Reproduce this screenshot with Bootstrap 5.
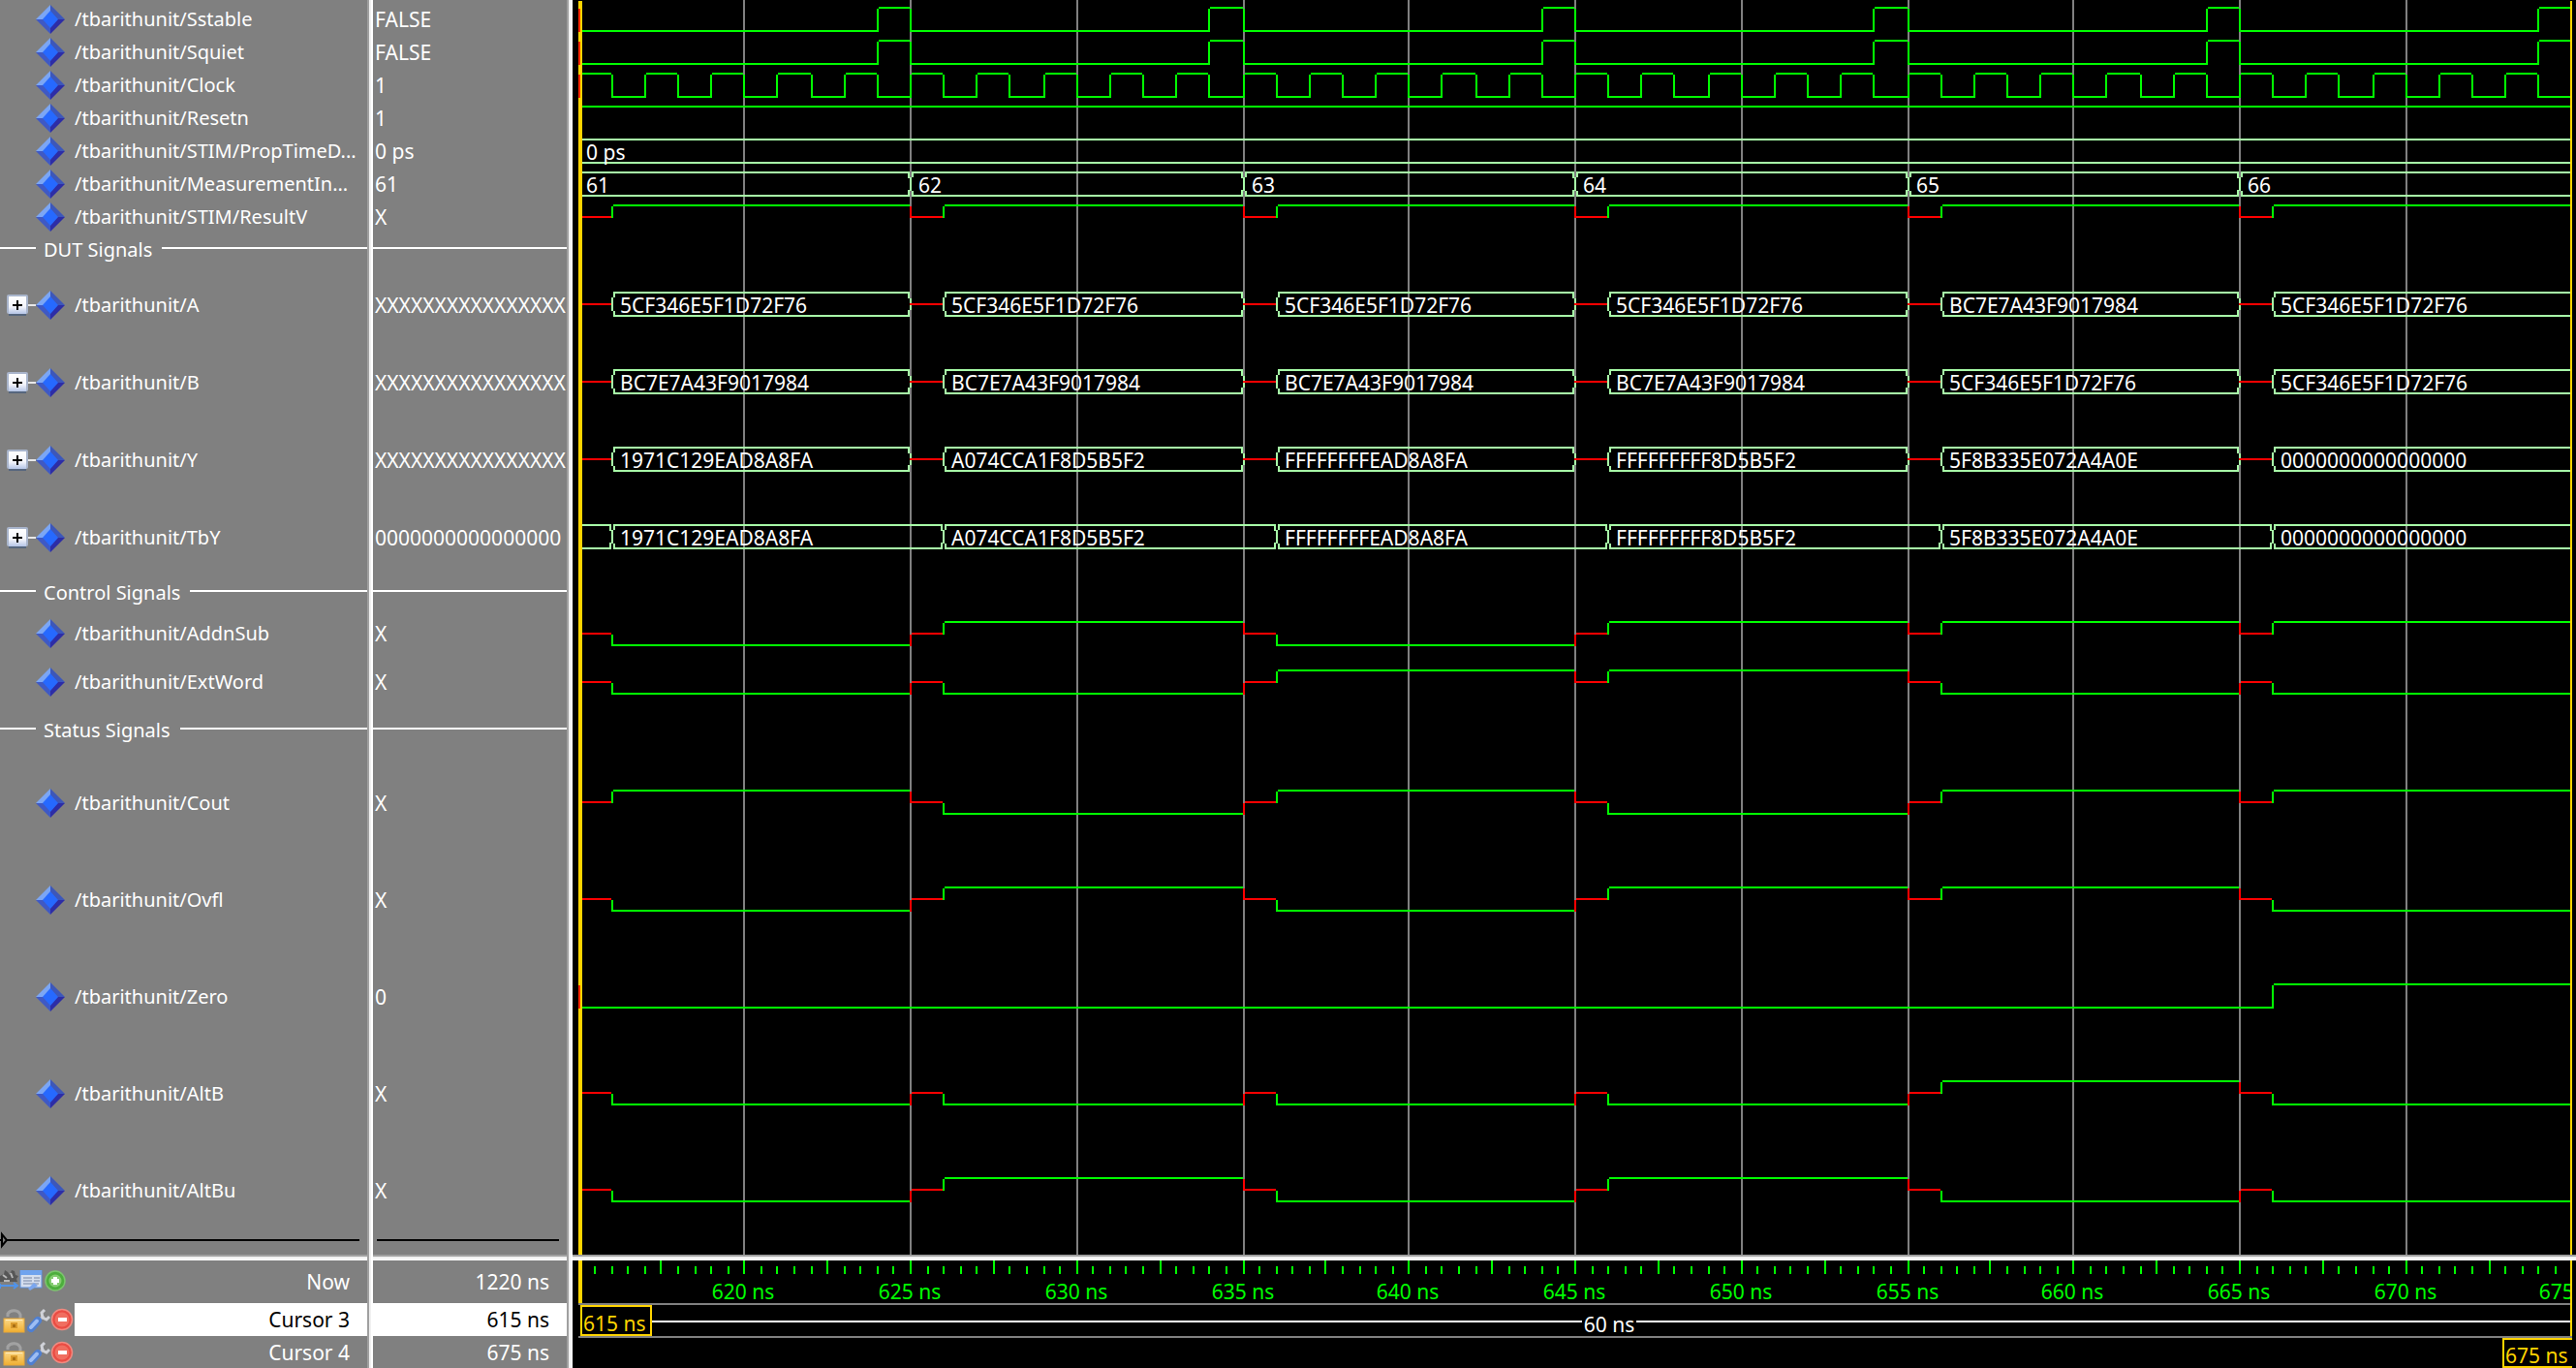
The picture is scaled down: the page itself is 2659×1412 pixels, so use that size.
<!DOCTYPE html>
<html lang="en">
<head>
<meta charset="utf-8">
<meta name="viewport" content="width=device-width, initial-scale=1">
<title>Wave - tbarithunit</title>
<link href="https://cdn.jsdelivr.net/npm/bootstrap@5.3.0/dist/css/bootstrap.min.css" rel="stylesheet">
<style>
body{background:#000;color:#fff;font-family:"Noto Sans","Open Sans",sans-serif;font-size:21px;line-height:30px}
.pane-grey{background:#808080}
.names-col{width:379px}
.values-col{width:200px}
.split-v{width:6px;background:linear-gradient(to right,#a0a0a0 0 2px,#f0f0f0 2px 4px,#fff 4px)}
.split-h{height:6px;background:linear-gradient(#a0a0a0 0 2px,#f0f0f0 2px 4px,#fff 4px)}
.rows-top{padding-top:3px}
.names-font{font-size:20px}
.h34{height:34px}.h50{height:50px}.h80{height:80px}.h100{height:100px}
.tree-btn{width:37px;height:30px;padding:0 0 0 7px;border:0;background:none;display:flex}
.tree-gap{width:37px}
.sig-name{padding-left:10px}
.sig-value{padding-left:2px}
.rule-line{height:2px;background:#fff;margin-bottom:4px}
.rule-lead{width:37px}
.rule-text{padding:0 10px 0 8px}
.end-row{height:16px}
.end-line{height:2px;background:#000}
.end-mark{left:0;top:-6px}
.now-row{height:44px}
.cur-row{height:34px}
.cur-last{height:33px}
.cur-tools{width:77px;padding-left:3px}
.now-tools{width:77px}
.tool-btn{border:0;background:none;padding:0;width:25px;height:24px;display:flex}
.tool-first{width:20px}
.end-text{padding-right:18px}
.picked{background:#fff;color:#000}
.under{left:0;top:0}
.waves-col{min-width:0}
svg{display:block;overflow:visible;flex-shrink:0}
svg text{font-size:21px;fill:#fff}
.grid-box,.wave-row svg{shape-rendering:crispEdges}
</style>
<script src="https://cdn.jsdelivr.net/npm/bootstrap@5.3.0/dist/js/bootstrap.bundle.min.js"></script>
</head>
<body class="overflow-x-hidden">
<svg width="0" height="0" class="position-absolute" aria-hidden="true">
  <defs>
    <linearGradient id="gBox" x1="0" y1="0" x2="0" y2="1"><stop offset="0" stop-color="#fff"/><stop offset=".6" stop-color="#f2f4fb"/><stop offset="1" stop-color="#b4c4e6"/></linearGradient>
    <linearGradient id="gGold" x1="0" y1="0" x2="0" y2="1"><stop offset="0" stop-color="#fbd98a"/><stop offset="1" stop-color="#f0ae30"/></linearGradient>
    <symbol id="gem" viewBox="0 0 30 30"><path d="M15 0L15 15L0 15z" fill="#7ba6f5"/><path d="M15 0L30 15H15z" fill="#3d57b9"/><path d="M0 15H15V30z" fill="#3f59c4"/><path d="M30 15H15V30z" fill="#2d2da6"/><path d="M15 6L23 15L15 24L7 15z" fill="#2669ff"/></symbol>
    <symbol id="plusbox" viewBox="0 0 30 22"><path d="M20 11h10" stroke="#e8e8e8" stroke-width="2"/><rect x="0" y="0" width="22" height="20" rx="2" fill="#a9b5cc"/><rect x="2" y="2" width="18" height="18" fill="url(#gBox)"/><rect x="2" y="20" width="18" height="2" fill="#56667e"/><path d="M6 11h10M11 6v10" stroke="#000" stroke-width="2"/></symbol>
    <symbol id="lock" viewBox="0 0 24 26"><path d="M5 9V6a7 6 0 0 1 13 1v4" fill="none" stroke="#a2a2a2" stroke-width="3"/><rect x="1" y="11" width="21" height="14" fill="url(#gGold)" stroke="#e8a838"/><path d="M3 12.500h17" stroke="#fdeec4" stroke-width="1"/><rect x="8" y="15" width="7" height="6" fill="#d99a2c"/><rect x="10" y="17" width="3" height="3" fill="#a86f14"/></symbol>
    <symbol id="wrench" viewBox="0 0 24 26"><path d="M10 15L17 8" stroke="#b9bcc2" stroke-width="3"/><path d="M18 2l-3 3 1 5 4 2 3-3" fill="none" stroke="#d0d2d8" stroke-width="3"/><path d="M4 21L11 13" stroke="#4f7fd0" stroke-width="8" stroke-linecap="round"/><path d="M4 20L10 13.500" stroke="#9dbdf3" stroke-width="4" stroke-linecap="round"/></symbol>
    <symbol id="minus" viewBox="0 0 24 24"><circle cx="12" cy="12" r="10.500" fill="#ea4c43" stroke="#f08a80" stroke-width="1.500"/><circle cx="12" cy="12" r="7.500" fill="#f06e60"/><rect x="8" y="10" width="9" height="4" fill="#fff"/></symbol>
    <symbol id="add" viewBox="0 0 24 24"><circle cx="12" cy="11" r="10" fill="#4cae3c" stroke="#7cc46e" stroke-width="1.500"/><circle cx="12" cy="11" r="6.500" fill="#84cc70"/><path d="M12 7v8M8 11h8" stroke="#fff" stroke-width="4"/></symbol>
    <symbol id="find" viewBox="0 0 20 22"><path d="M0 6L4 4 5 0 8 2 10 5 12 0 15 1 16 5 19 6 17 9 18 12H0z" fill="#565656"/><path d="M3 5l4 3M11 3l2 5M4 11h6" stroke="#b8b8b8" stroke-width="2"/><path d="M0 16H17M14 13l4 3-4 3M0 14v5" stroke="#4f93ea" stroke-width="2" fill="none"/></symbol>
    <symbol id="sheet" viewBox="0 0 24 24"><rect x="1" y="0" width="22" height="18" fill="#d5deee" stroke="#5b8fdd"/><rect x="1" y="0" width="22" height="5" fill="#6fa3ee"/><path d="M4 8h9M15 8h6M4 11h9M15 11h6M4 14h16" stroke="#96a4bd" stroke-width="1.500"/><path d="M9 19l6-6 4 3-8 5z" fill="#7ba6ee"/></symbol>
  </defs>
</svg>

<main class="d-flex align-items-stretch">
  <section class="names-col flex-shrink-0 d-flex flex-column pane-grey" aria-label="Signal names">
    <div class="rows-top names-font" id="names"></div>
    <div class="end-row position-relative pe-2">
      <div class="end-line"></div>
      <svg class="end-mark position-absolute" width="8" height="14"><path d="M2 1V13L7 7z" fill="#808080" stroke="#000" stroke-width="2"/></svg>
    </div>
    <div class="split-h"></div>
    <div class="now-row d-flex align-items-center">
      <div class="now-tools d-flex">
        <button class="tool-btn tool-first" aria-label="Find"><svg width="20" height="22"><use href="#find"/></svg></button>
        <button class="tool-btn" aria-label="Properties"><svg width="24" height="24"><use href="#sheet"/></svg></button>
        <button class="tool-btn" aria-label="Insert cursor"><svg width="24" height="24"><use href="#add"/></svg></button>
      </div>
      <div class="flex-grow-1 text-end end-text">Now</div>
    </div>
    <div class="cur-row d-flex align-items-stretch">
      <div class="cur-tools d-flex align-items-center flex-shrink-0">
        <button class="tool-btn" aria-label="Lock Cursor 3"><svg width="24" height="26"><use href="#lock"/></svg></button>
        <button class="tool-btn" aria-label="Edit Cursor 3"><svg width="24" height="26"><use href="#wrench"/></svg></button>
        <button class="tool-btn" aria-label="Remove Cursor 3"><svg width="24" height="24"><use href="#minus"/></svg></button>
      </div>
      <div class="flex-grow-1 picked d-flex align-items-center justify-content-end end-text">Cursor 3</div>
    </div>
    <div class="cur-last d-flex align-items-stretch">
      <div class="cur-tools d-flex align-items-center flex-shrink-0">
        <button class="tool-btn" aria-label="Lock Cursor 4"><svg width="24" height="26"><use href="#lock"/></svg></button>
        <button class="tool-btn" aria-label="Edit Cursor 4"><svg width="24" height="26"><use href="#wrench"/></svg></button>
        <button class="tool-btn" aria-label="Remove Cursor 4"><svg width="24" height="24"><use href="#minus"/></svg></button>
      </div>
      <div class="flex-grow-1 d-flex align-items-center justify-content-end end-text">Cursor 4</div>
    </div>
  </section>
  <div class="split-v flex-shrink-0"></div>
  <section class="values-col flex-shrink-0 d-flex flex-column pane-grey" aria-label="Values">
    <div class="rows-top" id="values"></div>
    <div class="end-row ps-1 pe-2"><div class="end-line"></div></div>
    <div class="split-h"></div>
    <div class="now-row d-flex align-items-center justify-content-end end-text">1220 ns</div>
    <div class="cur-row picked d-flex align-items-center justify-content-end end-text">615 ns</div>
    <div class="cur-last d-flex align-items-center justify-content-end end-text">675 ns</div>
  </section>
  <div class="split-v flex-shrink-0"></div>
  <section class="waves-col flex-grow-1 overflow-hidden d-flex flex-column" aria-label="Waveforms">
    <div class="position-relative">
      <svg class="grid-box under position-absolute" id="grid" width="100%" height="100%"></svg>
      <div class="rows-top position-relative" id="waves"></div>
      <div class="end-row"></div>
      <svg class="grid-box under position-absolute" id="marks" width="100%" height="100%"></svg>
    </div>
    <div class="split-h"></div>
    <svg id="timeline" width="100%" height="111"></svg>
  </section>
</main>

<script>
const T0 = 615, T1 = 675, P = '/tbarithunit/';
const A = '5CF346E5F1D72F76', B = 'BC7E7A43F9017984', Z = '0000000000000000', X16 = 'X'.repeat(16);
const Y = ['1971C129EAD8A8FA', 'A074CCA1F8D5B5F2', 'FFFFFFFFEAD8A8FA', 'FFFFFFFFF8D5B5F2', '5F8B335E072A4A0E', Z];

// one undefined nanosecond at the start of each 10 ns measurement, then the value
const perTest = v => [...v].flatMap((s, i) => [[T0 + 10 * i, 'X'], [T0 + 1 + 10 * i, s]]);
const pulse = [0, 1, 2, 3, 4, 5].flatMap(i => [[T0 + 10 * i, '0'], [T0 + 9 + 10 * i, '1']]);
const clock = Array.from({length: 60}, (_, i) => [T0 + i, i % 2 ? '0' : '1']);

const rows = [
  {n: 'Sstable', v: 'FALSE', h: 34, bit: pulse, edge: 1},
  {n: 'Squiet', v: 'FALSE', h: 34, bit: pulse, edge: 1},
  {n: 'Clock', v: '1', h: 34, bit: clock, edge: 1},
  {n: 'Resetn', v: '1', h: 34, bit: [[T0, '1']]},
  {n: 'STIM/PropTimeD...', v: '0 ps', h: 34, bus: [[T0, '0 ps']]},
  {n: 'MeasurementIn...', v: '61', h: 34, bus: [61, 62, 63, 64, 65, 66].map((m, i) => [T0 + 10 * i, '' + m])},
  {n: 'STIM/ResultV', v: 'X', h: 34, bit: perTest('111111')},
  {div: 'DUT Signals', h: 34},
  {n: 'A', v: X16, h: 80, tree: 1, bus: perTest([A, A, A, A, B, A])},
  {n: 'B', v: X16, h: 80, tree: 1, bus: perTest([B, B, B, B, A, A])},
  {n: 'Y', v: X16, h: 80, tree: 1, bus: perTest(Y)},
  {n: 'TbY', v: Z, h: 80, tree: 1, bus: [[T0, ''], ...Y.map((y, i) => [T0 + 1 + 10 * i, y])]},
  {div: 'Control Signals', h: 34},
  {n: 'AddnSub', v: 'X', h: 50, bit: perTest('010111')},
  {n: 'ExtWord', v: 'X', h: 50, bit: perTest('001100')},
  {div: 'Status Signals', h: 50},
  {n: 'Cout', v: 'X', h: 100, bit: perTest('101011')},
  {n: 'Ovfl', v: 'X', h: 100, bit: perTest('010110')},
  {n: 'Zero', v: '0', h: 100, bit: [[T0, '0'], [666, '1']], edge: 1},
  {n: 'AltB', v: 'X', h: 100, bit: perTest('000010')},
  {n: 'AltBu', v: 'X', h: 100, bit: perTest('010100')}
];

const $ = id => document.getElementById(id);
$('names').innerHTML = rows.map(r => r.div
  ? `<div class="h${r.h} d-flex align-items-center"><div class="rule-line rule-lead"></div><span class="rule-text">${r.div}</span><div class="rule-line flex-grow-1"></div></div>`
  : `<div class="h${r.h} d-flex align-items-center">` +
    (r.tree ? `<button class="tree-btn flex-shrink-0 align-items-center" aria-label="Expand ${r.n}"><svg width="30" height="22"><use href="#plusbox"/></svg></button>` : '<span class="tree-gap flex-shrink-0"></span>') +
    `<svg width="30" height="30"><use href="#gem"/></svg><span class="sig-name text-nowrap">${P}${r.n}</span></div>`).join('');
$('values').innerHTML = rows.map(r => r.div
  ? `<div class="h${r.h} d-flex align-items-center"><div class="rule-line flex-grow-1"></div></div>`
  : `<div class="h${r.h} d-flex align-items-center sig-value">${r.v}</div>`).join('');
$('waves').innerHTML = rows.map(r => `<div class="h${r.h} wave-row">${r.div ? '' : `<svg width="100%" height="${r.h}"></svg>`}</div>`).join('');

const box = (x, y, w, h, c) => w > 0 && h > 0 ? `<rect x="${x}" y="${y}" width="${w}" height="${h}" fill="${c}"/>` : '';
const GREEN = '#0f0', RED = '#f00', PALE = '#a8ffa8', GOLD = '#ffd400', GREY = '#808080';
// vertical centre of the trace inside a row of each height
const MID = {34: 17, 50: 25, 80: 39, 100: 49};

function draw() {
  const W = $('waves').clientWidth, last = W - 6;
  const px = t => Math.min(last, 6 + 2 * Math.floor((t - T0) * (W - 10) / 120 + 1e-6));

  document.querySelectorAll('.wave-row').forEach((el, i) => {
    const r = rows[i], svg = el.firstElementChild;
    if (!svg) return;
    const mid = MID[r.h];
    let s = '';
    if (r.bit) {
      const lvl = {'1': mid - 13, 'X': mid - 1, '0': mid + 11};
      r.bit.forEach(([t, v], k) => {
        const a = px(t), b = k + 1 < r.bit.length ? px(r.bit[k + 1][0]) : last, c = v === 'X' ? RED : GREEN;
        s += box(a + 2, lvl[v], b - a - 2, 2, c);
        if (k) {
          const p = lvl[r.bit[k - 1][1]], q = lvl[v];
          s += box(a, Math.min(p, q) + 2, 2, Math.abs(p - q), c);
        }
      });
    } else {
      r.bus.forEach(([t, v], k) => {
        const a = px(t), more = k + 1 < r.bus.length, b = more ? px(r.bus[k + 1][0]) : last;
        if (v === 'X') { s += box(a, mid - 1, b - a, 2, RED); return; }
        const l = k ? a + 2 : a;
        s += box(l, mid - 13, b - l, 2, PALE) + box(l, mid + 11, b - l, 2, PALE);
        if (k) s += box(a + 2, mid - 13, 2, 6, PALE) + box(a + 2, mid + 7, 2, 6, PALE) + box(a, mid - 7, 2, 14, PALE);
        if (more) s += box(b - 2, mid - 13, 2, 7, PALE) + box(b - 2, mid + 6, 2, 7, PALE) + box(b, mid - 6, 2, 12, PALE);
        s += `<text x="${a + (k ? 9 : 8)}" y="${mid + 9}">${v}</text>`;
      });
    }
    svg.innerHTML = s;
  });

  let g = '', m = '', ys = 3;
  for (let t = T0 + 5; t < T1; t += 5) g += box(px(t), 0, 2, 1295, GREY);
  m += box(6, 1, 4, 1294, GOLD) + box(last, 1, 2, 1294, GOLD);
  rows.forEach(r => {
    if (r.edge) m += box(6, ys + MID[r.h] - 11, 2, 24, '#ff2a00');
    ys += r.h;
  });
  $('grid').innerHTML = g;
  $('marks').innerHTML = m;

  let s = '';
  for (let k = 1; k < 120; k++) s += k % 5 ? box(px(T0 + k / 2), 6, 2, 8, GREEN) : box(px(T0 + k / 2), 0, 2, 14, GREEN);
  for (let t = T0 + 5; t <= T1; t += 5) s += `<text x="${px(t)}" y="40" text-anchor="middle" style="fill:#0f0">${t} ns</text>`;
  s += box(last + 2, 0, 80, 111, '#000');
  s += box(6, 44, last - 4, 2, GREY) + box(6, 78, last - 4, 2, GREY);
  s += box(6, 0, 4, 44, GOLD) + box(last, 0, 2, 78, GOLD);
  s += box(82, 62, last - 82, 2, '#fff');
  const c = 2 * Math.round((82 + last) / 4) - 2;
  s += box(c - 28, 52, 56, 22, '#000') + `<text x="${c}" y="74" text-anchor="middle">60 ns</text>`;
  s += `<rect x="9" y="47" width="72" height="30" fill="#000" stroke="${GOLD}" stroke-width="2"/><text x="11" y="73" style="fill:${GOLD}">615 ns</text>`;
  s += `<path d="M${last + 2} 81H${last - 69}V110H${last + 2}" fill="#000" stroke="${GOLD}" stroke-width="2"/><text x="${last - 67}" y="106" style="fill:${GOLD}">675 ns</text>`;
  $('timeline').innerHTML = s;
}
draw();
addEventListener('resize', draw);
</script>
</body>
</html>
